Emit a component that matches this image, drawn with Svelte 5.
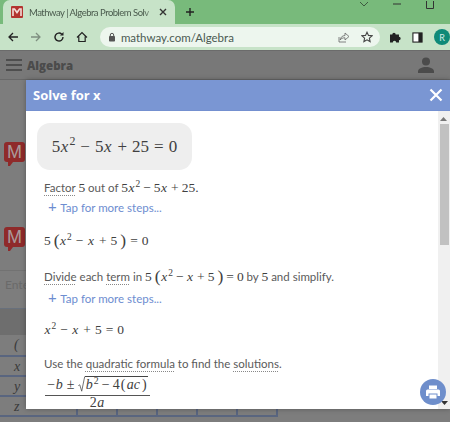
<script>
	const rows = ['(', 'x', 'y', 'z'];
	const cols = [0, 1, 2, 3, 4, 5, 6];
</script>

<div class="window">
	<div class="tabstrip">
		<div class="tab">
			<svg class="favicon" viewBox="0 0 12 12">
				<rect width="12" height="12" rx="1" fill="#b3342f" />
				<path d="M2 10V3h1.500L6 6.500 8.500 3H10v7" fill="none" stroke="#f3dcd8" stroke-width="1.600" />
			</svg>
			<span class="tab-title">Mathway | Algebra Problem Solv</span>
			<svg class="tab-close" viewBox="0 0 8 8"><path d="M1 1l6 6M7 1L1 7" stroke="#333" stroke-width="1.400" /></svg>
		</div>
		<svg class="newtab" viewBox="0 0 10 10"><path d="M5 1v8M1 5h8" stroke="#222" stroke-width="1.400" /></svg>
		<div class="winctl">
			<svg width="10" height="6" viewBox="0 0 10 6"><path d="M1 1l4 4 4-4" fill="none" stroke="#3d5a3f" /></svg>
			<svg width="10" height="6" viewBox="0 0 10 6"><path d="M1 3h8" stroke="#333" stroke-width="1" /></svg>
			<svg width="10" height="8" viewBox="0 0 10 8"><path d="M1.500-2v9.500h7V-2" fill="none" stroke="#333" /></svg>
		</div>
	</div>

	<div class="toolbar">
		<svg class="tool" viewBox="0 0 12 12"><path d="M11 6H2M6 2L2 6l4 4" fill="none" stroke="#222" stroke-width="1.300" /></svg>
		<svg class="tool" viewBox="0 0 12 12"><path d="M1 6h9M6 2l4 4-4 4" fill="none" stroke="#7f8f80" stroke-width="1.300" /></svg>
		<svg class="tool" viewBox="0 0 12 12"><path d="M10 6a4 4 0 1 1-1.200-2.800" fill="none" stroke="#222" stroke-width="1.400" /><path d="M10.500 1v3.500H7z" fill="#222" /></svg>
		<svg class="tool" viewBox="0 0 12 12"><path d="M1 6.500L6 1.500l5 5M2.800 5.500V10.500h6.400V5.500" fill="none" stroke="#222" stroke-width="1.200" /></svg>
		<div class="omnibox">
			<svg class="lock" viewBox="0 0 8 10"><rect x="1" y="4" width="6" height="5.500" rx=".8" fill="#555" /><path d="M2.300 4V3a1.700 1.700 0 0 1 3.400 0v1" fill="none" stroke="#555" /></svg>
			<span class="url">mathway.com/Algebra</span>
			<svg class="share" viewBox="0 0 12 12"><path d="M7 4.500V2l4 3.500-4 3.500V6.800C4.500 6.800 3 7.500 2.200 9 2.300 6.500 4 4.800 7 4.500z" fill="none" stroke="#666" stroke-width=".8" /><path d="M1 6v5h7" fill="none" stroke="#666" stroke-width=".8" /></svg>
			<svg class="star" viewBox="0 0 12 12"><path d="M6 1.200l1.500 3.200 3.500.4-2.600 2.300.7 3.500L6 8.800l-3.100 1.800.7-3.500L1 4.800l3.500-.4z" fill="none" stroke="#444" stroke-width="1.100" /></svg>
		</div>
		<svg class="ext" viewBox="0 0 12 12"><path d="M1 3.500h2.300a1.700 1.700 0 0 1 3.400 0H10v2.300a1.700 1.700 0 0 1 0 3.400V11.500H7.200a1.700 1.700 0 0 0-3.400 0H1z" fill="#222" /></svg>
		<svg class="panel" viewBox="0 0 12 12"><rect x="1" y="1" width="10" height="10" fill="#fff" stroke="#222" stroke-width="1.200" /><rect x="7" y="1" width="4" height="10" fill="#222" /></svg>
		<div class="avatar">R</div>
	</div>

	<div class="page">
		<header class="appbar">
			<div class="burger"><i></i><i></i><i></i></div>
			<b>Algebra</b>
			<svg class="user" viewBox="0 0 18 16"><circle cx="9" cy="4.500" r="4" fill="#4b4b4b" /><path d="M1 16v-1.500C1 11.500 5 10 9 10s8 1.500 8 4.500V16z" fill="#4b4b4b" /></svg>
		</header>

		<div class="backdrop">
			<div class="logo l1"><span>M</span></div>
			<div class="logo l2"><span>M</span></div>
			<div class="enter">Enter</div>
			<div class="band"></div>
			<div class="keys">
				{#each rows as r}
					<div class="keyrow">
						{#each cols as c}
							<div class="key">{c === 0 ? r : ''}</div>
						{/each}
					</div>
				{/each}
			</div>
		</div>

		<section class="modal">
			<div class="modal-head">
				<span>Solve for x</span>
				<svg class="close" viewBox="0 0 14 14"><path d="M1.500 1.500l11 11M12.500 1.500l-11 11" stroke="#fff" stroke-width="2.200" /></svg>
			</div>
			<div class="modal-body">
				<div class="steps">
					<div class="eqbox math">5<em>x</em><sup>2</sup><s>−</s>5<em>x</em><s>+</s>25<s>=</s>0</div>

					<p class="line first"><u>Factor</u> <span class="math">5</span> out of <span class="math">5<em>x</em><sup>2</sup><s>−</s>5<em>x</em><s>+</s>25.</span></p>
					<div class="tap t1"><span class="plus">+</span> Tap for more steps...</div>

					<div class="math step s1">5<span class="paren">(</span><em>x</em><sup>2</sup><s>−</s><em>x</em><s>+</s>5<span class="paren">)</span><s>=</s>0</div>

					<p class="line second"><u>Divide</u> each <u>term</u> in <span class="math">5<span class="paren">(</span><em>x</em><sup>2</sup><s>−</s><em>x</em><s>+</s>5<span class="paren">)</span><s>=</s>0</span> by <span class="math">5</span> and simplify.</p>
					<div class="tap"><span class="plus">+</span> Tap for more steps...</div>

					<div class="math step s2"><em>x</em><sup>2</sup><s>−</s><em>x</em><s>+</s>5<s>=</s>0</div>

					<p class="line third">Use the <u>quadratic formula</u> to find the <u>solutions</u>.</p>
					<div class="frac math">
						<div class="num"><span>−<em>b</em><s class="pm">±</s></span><svg class="radical" viewBox="0 0 10 20" preserveAspectRatio="none"><path d="M0.500 12l2-1 2.800 8L9.500 1H10" fill="none" stroke="#444" stroke-width="1" /></svg><span class="radicand"><em>b</em><sup>2</sup><s>−</s>4<span class="paren-s">(</span><em>ac</em><span class="paren-s">)</span></span></div>
						<div class="den">2<em>a</em></div>
					</div>
				</div>

				<div class="scrollbar">
					<svg class="sb-arrow" viewBox="0 0 7 5"><path d="M3.500 0L7 4H0z" fill="#777" /></svg>
					<div class="thumb"></div>
					<svg class="sb-down" viewBox="0 0 7 4"><path d="M0 0h7L3.500 4z" fill="#333" /></svg>
				</div>

				<button class="print" aria-label="Print">
					<svg viewBox="0 0 16 16"><path d="M4 1.500h8V5H4z" fill="#fff" /><path d="M2.500 5.500h11a1.500 1.500 0 0 1 1.500 1.500v5h-2.500V9.500h-9V12H1V7a1.500 1.500 0 0 1 1.500-1.500z" fill="#fff" /><rect x="4.500" y="10.500" width="7" height="4" fill="#fff" /></svg>
				</button>
			</div>
		</section>
	</div>
</div>

<style>
	:global(body) {
		margin: 0;
		background: #787878;
	}

	.window {
		width: 450px;
		height: 422px;
		overflow: hidden;
		display: flex;
		flex-direction: column;
		font-family: Lato, 'Open Sans', sans-serif;
	}

	.tabstrip {
		height: 24px;
		background: #78ba7b;
		display: flex;
		align-items: flex-end;
		flex-shrink: 0;
	}

	.tab {
		width: 172px;
		height: 24px;
		margin-left: 3px;
		background: #c7e3c8;
		border-radius: 7px 7px 0 0;
		display: flex;
		align-items: center;
		padding-left: 8px;
		box-sizing: border-box;
		position: relative;
	}

	.favicon {
		width: 12px;
		height: 12px;
		flex-shrink: 0;
	}

	.tab-title {
		margin-left: 6px;
		width: 128px;
		flex-shrink: 0;
		white-space: nowrap;
		font-size: 9.5px;
		letter-spacing: -0.5px;
		color: #4a5a4d;
		-webkit-mask-image: linear-gradient(to right, #000 90%, transparent);
		mask-image: linear-gradient(to right, #000 90%, transparent);
	}

	.tab-close {
		width: 8px;
		height: 8px;
		margin-left: 2px;
	}

	.newtab {
		width: 10px;
		height: 10px;
		margin: 0 0 7px 10px;
	}

	.winctl {
		margin-left: auto;
		align-self: flex-start;
		display: flex;
		gap: 23px;
		padding-right: 15px;
		align-items: flex-start;
		padding-top: 1px;
	}

	.toolbar {
		height: 26px;
		background: #c7e3c8;
		display: flex;
		align-items: center;
		padding-left: 7px;
		flex-shrink: 0;
		box-sizing: border-box;
	}

	.tool {
		width: 12px;
		height: 12px;
		margin-right: 11px;
	}

	.omnibox {
		width: 281px;
		height: 20px;
		margin-left: 1px;
		background: #edf6ee;
		border-radius: 10px;
		display: flex;
		align-items: center;
		padding-left: 8px;
		box-sizing: border-box;
	}

	.lock {
		width: 8px;
		height: 10px;
	}

	.url {
		margin-left: 5px;
		font-size: 11.5px;
		color: #4b5a52;
	}

	.share {
		width: 12px;
		height: 12px;
		margin-left: auto;
	}

	.star {
		width: 12px;
		height: 12px;
		margin: 0 7px 0 11px;
	}

	.ext {
		width: 12px;
		height: 12px;
		margin-left: 9px;
	}

	.panel {
		width: 11px;
		height: 11px;
		margin-left: 11px;
	}

	.avatar {
		width: 16px;
		height: 16px;
		margin-left: 11px;
		border-radius: 50%;
		background: #0f8a78;
		color: #d5ece8;
		font-size: 9px;
		display: flex;
		align-items: center;
		justify-content: center;
	}

	.page {
		position: relative;
		flex: 1;
		display: flex;
		flex-direction: column;
		background: #787878;
	}

	.appbar {
		height: 28px;
		display: flex;
		align-items: center;
		padding: 0 15px 0 6px;
		border-bottom: 1px solid #686868;
		border-top: 1px solid #6b6b6b;
		color: #4b4b4b;
		font: 700 11.5px 'Open Sans', sans-serif;
		flex-shrink: 0;
	}

	.appbar b {
		margin-left: 5px;
	}

	.burger {
		width: 16px;
		display: flex;
		flex-direction: column;
		gap: 3px;
	}

	.burger i {
		display: block;
		height: 2px;
		background: #4e4e4e;
	}

	.user {
		width: 18px;
		height: 16px;
		margin-left: auto;
	}

	.backdrop {
		flex: 1;
		display: flex;
		flex-direction: column;
		background: #7d7d7d;
		position: relative;
	}

	.logo {
		position: absolute;
		left: 4px;
		width: 21px;
		height: 20px;
		background: #8f2a2a;
		border-radius: 3px;
		text-align: center;
	}

	.logo::after {
		content: '';
		position: absolute;
		left: 4px;
		top: 20px;
		border-left: 2px solid #8f2a2a;
		border-right: 3px solid transparent;
		border-top: 4px solid #8f2a2a;
	}

	.logo span {
		display: block;
		color: #a99a9a;
		font: 400 18px/20px 'Liberation Sans', sans-serif;
	}

	.l1 {
		top: 62px;
	}

	.l2 {
		top: 147px;
	}

	.enter {
		margin-top: 190px;
		height: 38px;
		box-sizing: border-box;
		padding: 6px 0 0 5px;
		border-top: 1px solid #727272;
		color: #6a6a6a;
		font-size: 12px;
	}

	.band {
		height: 27px;
		background: #6e6e6e;
		border-top: 1px solid #68707c;
		box-sizing: border-box;
	}

	.keys {
		display: flex;
		flex-direction: column;
	}

	.keyrow {
		display: flex;
		height: 20px;
		box-sizing: border-box;
		border-bottom: 2px solid #59657f;
		width: 278px;
	}

	.keyrow:first-child {
		height: 22px;
	}

	.key {
		width: 40px;
		border-right: 2px solid #59657f;
		box-sizing: border-box;
		font: italic 14px/19px 'Liberation Serif', serif;
		color: #3a3a3a;
	}

	.key:first-child {
		width: 38px;
		border-right: 0;
		padding-left: 14px;
	}

	.modal {
		position: absolute;
		left: 26px;
		top: 30px;
		width: 424px;
		height: 329px;
		background: #fff;
		display: flex;
		flex-direction: column;
		box-shadow: 0 0 5px rgba(0, 0, 0, 0.3);
	}

	.modal-head {
		height: 31px;
		flex-shrink: 0;
		background: #7a96d3;
		border-bottom: 1px solid #7490d0;
		box-sizing: border-box;
		display: flex;
		align-items: center;
		justify-content: space-between;
		padding: 0 7px;
		color: #fff;
		font: 700 13px 'Open Sans', sans-serif;
	}

	.close {
		width: 14px;
		height: 14px;
	}

	.modal-body {
		position: relative;
		flex: 1;
		overflow: hidden;
		display: flex;
	}

	.steps {
		flex: 1;
		padding: 12px 0 0 11px;
		min-width: 0;
	}

	.math {
		font-family: 'Liberation Serif', 'Times New Roman', serif;
		color: #404040;
		white-space: nowrap;
	}

	.math em {
		font-style: italic;
		margin: 0 1px 0 0.5px;
	}

	.math s {
		text-decoration: none;
		margin: 0 3px;
	}

	.math sup {
		font-size: 70%;
		line-height: 0;
		vertical-align: 0.55em;
	}

	.eqbox {
		width: 155px;
		height: 47px;
		background: #eeeeee;
		border-radius: 13px;
		box-sizing: border-box;
		font-size: 17px;
		line-height: 47px;
		text-align: center;
	}

	.eqbox s {
		margin: 0 5px;
	}

	.line {
		margin: 0;
		padding-left: 7px;
		font-size: 11.5px;
		line-height: 16px;
		color: #5a5a5a;
		white-space: nowrap;
	}

	.line .math {
		font-size: 13.5px;
	}

	.line .math s {
		margin: 0 3px;
	}

	.line u {
		text-decoration: underline dotted #888 1px;
		text-underline-offset: 3px;
	}

	.first {
		margin-top: 10px;
	}

	.second {
		margin-top: 19px;
	}

	.third {
		margin-top: 17px;
	}

	.tap {
		margin: 4px 0 0 11px;
		font-size: 11.5px;
		line-height: 16px;
		color: #6d8dd0;
	}

	.t1 {
		margin-top: 2px;
	}

	.plus {
		font-size: 15px;
		margin-right: 1px;
	}

	.step {
		padding-left: 7px;
		font-size: 13.5px;
		line-height: 18px;
	}

	.step s {
		margin: 0 4px;
	}

	.paren {
		font-size: 130%;
		line-height: 0;
		margin: 0 0 0 3px;
		vertical-align: -0.06em;
	}

	.paren + s {
		margin-left: 4px;
	}

	.s1 {
		margin-top: 16px;
	}

	.s2 {
		margin-top: 14px;
	}

	.frac {
		display: inline-flex;
		flex-direction: column;
		align-items: center;
		margin: 3px 0 0 8px;
		font-size: 14px;
		width: 105px;
	}

	.num {
		display: flex;
		align-items: flex-end;
		height: 17px;
		line-height: 15px;
		border-bottom: 1px solid #555;
		width: 105px;
		justify-content: center;
		padding-bottom: 3px;
	}

	.radical {
		width: 7px;
		height: 16px;
		margin-left: 1px;
	}

	.radicand {
		border-top: 1px solid #444;
	}

	.paren-s {
		margin: 0 1px;
	}

	.den {
		line-height: 13px;
	}

	.scrollbar {
		width: 12px;
		flex-shrink: 0;
		background: #f0f0f0;
		position: relative;
	}

	.sb-arrow {
		position: absolute;
		left: 2px;
		top: 6px;
		width: 7px;
		height: 5px;
	}

	.thumb {
		position: absolute;
		left: 2px;
		right: 1px;
		top: 13px;
		height: 121px;
		background: #c1c1c1;
	}

	.sb-down {
		position: absolute;
		left: 3px;
		bottom: 4px;
		width: 7px;
		height: 4px;
	}

	.print {
		position: absolute;
		left: 394px;
		bottom: 4px;
		width: 26px;
		height: 26px;
		padding: 5px;
		border: 0;
		border-radius: 50%;
		background: #6e8ecb;
		display: flex;
	}

	.print svg {
		width: 16px;
		height: 16px;
	}
</style>
